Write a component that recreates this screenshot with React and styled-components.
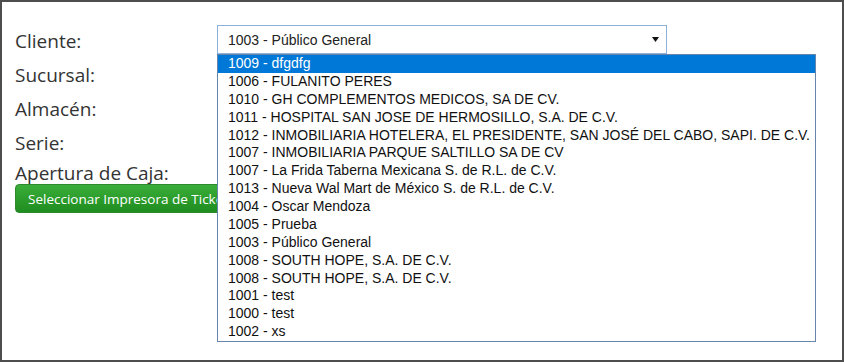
import styled, { createGlobalStyle } from "styled-components"

const GlobalStyle = createGlobalStyle`
  html, body { margin: 0; padding: 0; background: #fff; }
  body { font-family: "Open Sans", "Liberation Sans", sans-serif; }
`

const clientes = [
    "1009 - dfgdfg",
    "1006 - FULANITO PERES",
    "1010 - GH COMPLEMENTOS MEDICOS, SA DE CV.",
    "1011 - HOSPITAL SAN JOSE DE HERMOSILLO, S.A. DE C.V.",
    "1012 - INMOBILIARIA HOTELERA, EL PRESIDENTE, SAN JOSÉ DEL CABO, SAPI. DE C.V.",
    "1007 - INMOBILIARIA PARQUE SALTILLO SA DE CV",
    "1007 - La Frida Taberna Mexicana S. de R.L. de C.V.",
    "1013 - Nueva Wal Mart de México S. de R.L. de C.V.",
    "1004 - Oscar Mendoza",
    "1005 - Prueba",
    "1003 - Público General",
    "1008 - SOUTH HOPE, S.A. DE C.V.",
    "1008 - SOUTH HOPE, S.A. DE C.V.",
    "1001 - test",
    "1000 - test",
    "1002 - xs",
]

const Frame = styled.div`
    width: 844px;
    height: 362px;
    box-sizing: border-box;
    border: 2px solid #4d4d4d;
    padding: 22px 13px 0;
    overflow: hidden;
`

const Form = styled.div`
    display: grid;
    grid-template-columns: 202px 450px;
    grid-auto-rows: auto;
`

const Label = styled.div`
    grid-column: 1;
    font-size: 19px;
    color: #333;
    line-height: ${(p) => (p.$short ? "22px" : "34px")};
    padding-top: ${(p) => (p.$short ? "2px" : "0")};
    white-space: nowrap;
`

const Field = styled.div`
    grid-column: 2;
    grid-row: 1;
    position: relative;
    align-self: start;
    margin-top: 1px;
    z-index: 2;
`

const Select = styled.div`
    height: 29px;
    box-sizing: border-box;
    border: 1px solid #8fb0da;
    display: flex;
    align-items: center;
    justify-content: space-between;
    padding: 0 7px 0 10px;
    font-family: "Liberation Sans", Arial, sans-serif;
    font-size: 14px;
    color: #222;
    background: #fff;
`

const Arrow = styled.svg`
    width: 7px;
    height: 5px;
`

const List = styled.ul`
    position: absolute;
    top: 100%;
    left: 0;
    width: 599px;
    box-sizing: border-box;
    margin: 0;
    padding: 0;
    list-style: none;
    border: 1px solid #6785ab;
    background: #fff;
`

const Option = styled.li`
    height: 17.875px;
    line-height: 17.875px;
    padding-left: 10px;
    font-family: "Liberation Sans", Arial, sans-serif;
    font-size: 14px;
    white-space: nowrap;
    color: ${(p) => (p.$active ? "#fff" : "#111")};
    background: ${(p) => (p.$active ? "#0078d7" : "transparent")};
`

const ButtonCell = styled.div`
    grid-column: 1 / span 2;
`

const GreenButton = styled.button`
    height: 29px;
    box-sizing: border-box;
    padding: 0 12px;
    border: 1px solid #2d8a2d;
    border-radius: 4px;
    background: linear-gradient(#3aae3a, #1f8c1f);
    color: #fff;
    font-family: "Open Sans", "Liberation Sans", sans-serif;
    font-size: 13.5px;
    white-space: nowrap;
    cursor: pointer;
`

export default function App() {
    return (
        <>
            <GlobalStyle />
            <Frame>
                <Form>
                    <Label>Cliente:</Label>
                    <Field>
                        <Select>
                            <span>1003 - Público General</span>
                            <Arrow viewBox="0 0 7 5">
                                <path d="M0 0 H7 L3.5 5 Z" fill="#111" />
                            </Arrow>
                        </Select>
                        <List>
                            {clientes.map((c, i) => (
                                <Option key={i} $active={i === 0}>{c}</Option>
                            ))}
                        </List>
                    </Field>
                    <Label>Sucursal:</Label>
                    <Label>Almacén:</Label>
                    <Label>Serie:</Label>
                    <Label $short>Apertura de Caja:</Label>
                    <ButtonCell>
                        <GreenButton>Seleccionar Impresora de Tickets</GreenButton>
                    </ButtonCell>
                </Form>
            </Frame>
        </>
    )
}
